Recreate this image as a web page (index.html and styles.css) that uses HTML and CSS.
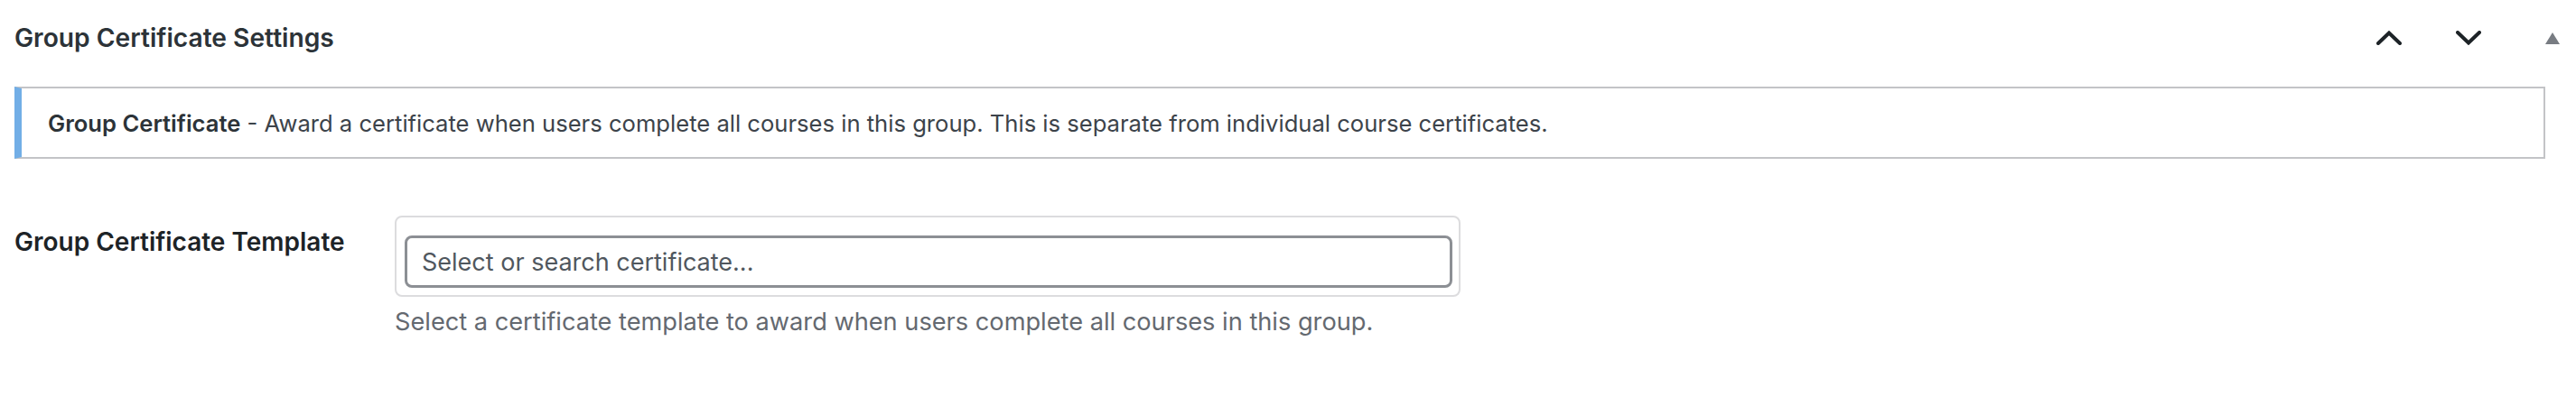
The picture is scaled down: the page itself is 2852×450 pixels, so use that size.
FILE: index.html
```html
<!DOCTYPE html>
<html lang="en">
<head>
<meta charset="utf-8">
<title>Group Certificate Settings</title>
<link rel="stylesheet" href="styles.css">
</head>
<body>
<div class="postbox">
  <div class="postbox-header">
    <h2 class="hndle">Group Certificate Settings</h2>
    <div class="handle-actions">
      <button class="handle-btn" type="button" aria-label="Move up">
        <svg width="28" height="16" viewBox="0 0 28 16"><path d="M2 14 L14 2.5 L26 14" fill="none" stroke="#1d2327" stroke-width="4" stroke-linecap="round" stroke-linejoin="miter"/></svg>
      </button>
      <button class="handle-btn" type="button" aria-label="Move down">
        <svg width="28" height="16" viewBox="0 0 28 16"><path d="M2 2 L14 13.5 L26 2" fill="none" stroke="#1d2327" stroke-width="4" stroke-linecap="round" stroke-linejoin="miter"/></svg>
      </button>
      <button class="handle-btn toggle" type="button" aria-label="Toggle panel">
        <svg width="16" height="13" viewBox="0 0 16 13"><path d="M8 0 L16 13 L0 13 Z" fill="#787c82"/></svg>
      </button>
    </div>
  </div>
  <div class="inside">
    <div class="notice">
      <p><strong>Group Certificate</strong> - Award a certificate when users complete all courses in this group. This is separate from individual course certificates.</p>
    </div>
    <div class="form-row">
      <div class="field-label">Group Certificate Template</div>
      <div class="field">
        <div class="select-wrap">
          <div class="select-input">Select or search certificate...</div>
        </div>
        <p class="description">Select a certificate template to award when users complete all courses in this group.</p>
      </div>
    </div>
  </div>
</div>
</body>
</html>
```
FILE: styles.css
```css
* { box-sizing: border-box; }
html, body { margin: 0; padding: 0; background: #ffffff; }
body {
  font-family: Inter, "Noto Sans", "Liberation Sans", sans-serif;
  color: #3c434a;
  width: 2852px;
  height: 450px;
  overflow: hidden;
}
.postbox { padding: 0 0 0 16px; }
.postbox-header {
  display: flex;
  align-items: center;
  justify-content: space-between;
  height: 84px;
}
.hndle {
  margin: 0;
  font-size: 28.2px;
  font-weight: 600;
  color: #2c3338;
}
.handle-actions {
  display: flex;
  align-items: center;
  height: 100%;
  padding-right: 14px;
}
.handle-btn {
  border: 0;
  background: transparent;
  padding: 0;
  margin: 0;
  width: 88px;
  height: 80px;
  display: flex;
  align-items: center;
  justify-content: center;
}
.handle-btn.toggle { width: 24px; margin-left: 37px; }
.inside { padding-right: 34px; }
.notice {
  margin-top: 12px;
  height: 80px;
  border: 2px solid #c3c4c7;
  border-left: 8px solid #72aee6;
  display: flex;
  align-items: center;
  padding: 0 0 0 29px;
}
.notice p {
  margin: 0;
  font-size: 25.6px;
  color: #3c434a;
}
.notice strong { font-weight: 600; color: #2c3338; }
.form-row {
  display: flex;
  margin-top: 63px;
}
.field-label {
  width: 421px;
  flex: 0 0 421px;
  padding-top: 11px;
  font-size: 28px;
  font-weight: 600;
  color: #1d2327;
  line-height: 36px;
}
.field { width: 1180px; }
.select-wrap {
  border: 2px solid #dcdcde;
  border-radius: 8px;
  height: 90px;
  padding: 20px 7px 8px 9px;
}
.select-input {
  height: 58px;
  border: 3px solid #8c8f94;
  border-radius: 8px;
  padding: 0 0 0 16px;
  display: flex;
  align-items: center;
  font-size: 27px;
  color: #50575e;
}
.description {
  margin: 10px 0 0 0;
  font-size: 27.2px;
  line-height: 36px;
  color: #646970;
}
```
